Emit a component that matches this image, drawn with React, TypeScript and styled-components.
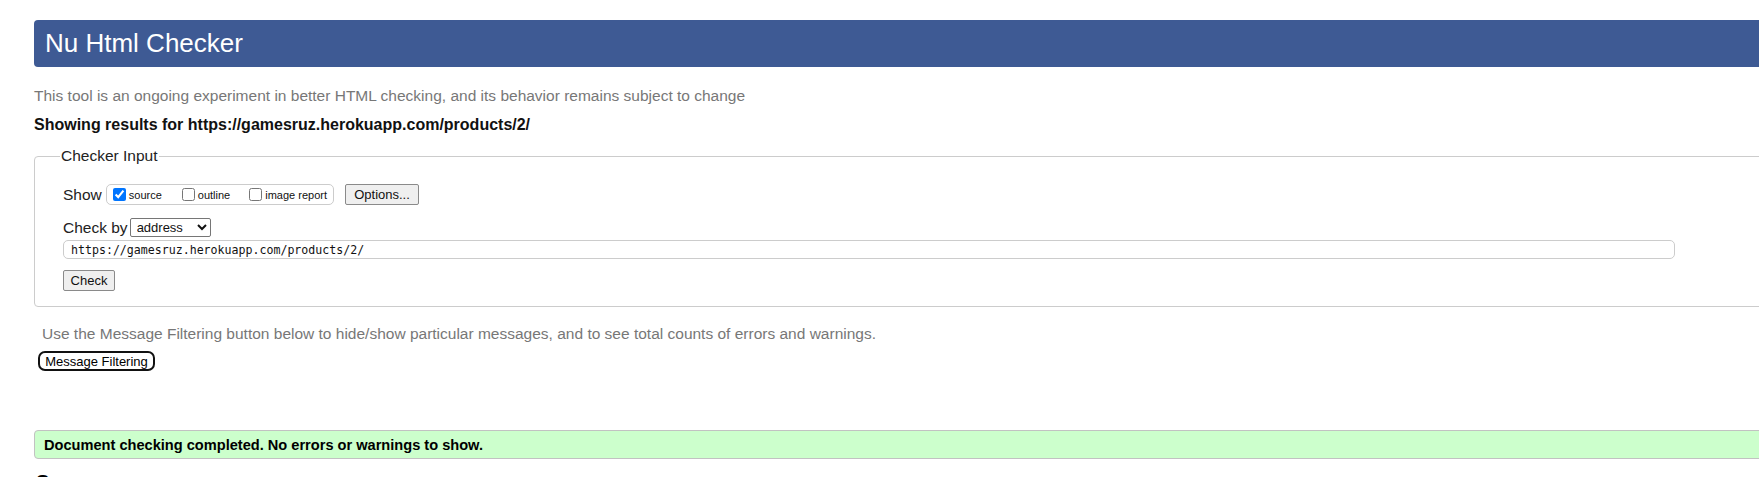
import React from "react";
import styled, { createGlobalStyle } from "styled-components";

const GlobalStyle = createGlobalStyle`
  html, body {
    margin: 0;
    padding: 0;
    background: #ffffff;
    overflow: hidden;
  }
  body {
    font-family: "Liberation Sans", Arial, sans-serif;
    color: #000;
  }
`;

const Page = styled.div`
  width: 1766px;
  padding: 20px 0 0 34px;
`;

const Title = styled.h1`
  margin: 0;
  height: 47px;
  box-sizing: border-box;
  padding: 9px 0 0 11px;
  background: #3e5a94;
  color: #ffffff;
  border-radius: 4px;
  font-size: 26px;
  font-weight: normal;
  line-height: 29px;
`;

const Note = styled.p<{ $indent?: number; $top: number }>`
  margin: ${(p) => p.$top}px 0 0 ${(p) => p.$indent ?? 0}px;
  color: #777777;
  font-size: 15.5px;
  line-height: 18px;
`;

const Results = styled.p`
  margin: 11px 0 0;
  font-size: 16px;
  font-weight: bold;
  line-height: 18px;
  color: #111;
`;

const Fieldset = styled.fieldset`
  margin: 13px 0 0;
  border: 1px solid #cccccc;
  border-radius: 4px;
  padding: 0 0 15px 28px;
  min-width: 0;
`;

const Legend = styled.legend`
  padding: 0 1px;
  margin-left: -3px;
  font-size: 15.5px;
  line-height: 18px;
  color: #222;
`;

const Row = styled.div<{ $top: number; $h: number }>`
  display: flex;
  align-items: center;
  height: ${(p) => p.$h}px;
  margin-top: ${(p) => p.$top}px;
`;

const Label = styled.span`
  font-size: 15.5px;
  line-height: 18px;
  color: #222;
`;

const OptionGroup = styled.div`
  display: flex;
  align-items: center;
  height: 21px;
  box-sizing: border-box;
  margin-left: 4px;
  padding: 0 6px 0 3px;
  border: 1px solid #cccccc;
  border-radius: 5px;
`;

const CheckItem = styled.label<{ $gap: number }>`
  display: flex;
  align-items: center;
  margin-left: ${(p) => p.$gap}px;
  font-size: 11px;
  color: #111;
`;

const Check = styled.input`
  width: 13px;
  height: 13px;
  margin: 0 3px 0 3px;
`;

const Button = styled.button<{ $w: number }>`
  width: ${(p) => p.$w}px;
  height: 21px;
  box-sizing: border-box;
  padding: 0;
  margin: 0;
  background: #efefef;
  border: 1px solid #8a8a8a;
  border-radius: 2px;
  font-family: "Liberation Sans", Arial, sans-serif;
  font-size: 13px;
  color: #111;
`;

const OptionsButton = styled(Button)`
  margin-left: 11px;
`;

const Select = styled.select`
  width: 81px;
  height: 19px;
  margin: 0 0 0 2px;
  padding: 0 0 0 2px;
  font-family: "Liberation Sans", Arial, sans-serif;
  font-size: 13px;
  color: #111;
  background: #fff;
  border: 1px solid #767676;
  border-radius: 2px;
`;

const UrlInput = styled.input`
  display: block;
  width: 1612px;
  height: 19px;
  box-sizing: border-box;
  margin: 3px 0 0;
  padding: 0 0 0 7px;
  border: 1px solid #cccccc;
  border-radius: 5px;
  font-family: "DejaVu Sans Mono", "Liberation Mono", monospace;
  font-size: 11.6px;
  color: #111;
`;

const CheckButtonWrap = styled.div`
  margin-top: 11px;
  height: 21px;
`;

const FilterButton = styled.button`
  display: block;
  margin: 8px 0 0 4px;
  width: 117px;
  height: 20px;
  box-sizing: border-box;
  padding: 0;
  background: #ffffff;
  border: 2px solid #111111;
  border-radius: 7px;
  font-family: "Liberation Sans", Arial, sans-serif;
  font-size: 13px;
  color: #000;
`;

const Success = styled.div`
  margin-top: 59px;
  height: 29px;
  box-sizing: border-box;
  padding: 0 0 0 9px;
  display: flex;
  align-items: center;
  background: #ccffcc;
  border: 1px solid #c2c2c2;
  border-radius: 4px;
  font-size: 14.6px;
  font-weight: bold;
  color: #000;
`;

const SourceHeading = styled.h2`
  margin: 12px 0 0 2px;
  font-size: 20px;
  line-height: 23px;
  font-weight: bold;
`;

export default function App() {
  return (
    <>
      <GlobalStyle />
      <Page>
        <Title>Nu Html Checker</Title>
        <Note $top={20}>
          This tool is an ongoing experiment in better HTML checking, and its
          behavior remains subject to change
        </Note>
        <Results>
          Showing results for https://gamesruz.herokuapp.com/products/2/
        </Results>
        <Fieldset>
          <Legend>Checker Input</Legend>
          <Row $top={19} $h={21}>
            <Label>Show</Label>
            <OptionGroup>
              <CheckItem $gap={0}>
                <Check type="checkbox" defaultChecked />
                source
              </CheckItem>
              <CheckItem $gap={17}>
                <Check type="checkbox" />
                outline
              </CheckItem>
              <CheckItem $gap={16}>
                <Check type="checkbox" />
                image report
              </CheckItem>
            </OptionGroup>
            <OptionsButton type="button" $w={74}>
              Options...
            </OptionsButton>
          </Row>
          <Row $top={13} $h={19}>
            <Label>Check by</Label>
            <Select defaultValue="address">
              <option value="address">address</option>
              <option value="upload">file upload</option>
              <option value="text">text input</option>
            </Select>
          </Row>
          <UrlInput
            type="text"
            defaultValue="https://gamesruz.herokuapp.com/products/2/"
          />
          <CheckButtonWrap>
            <Button type="button" $w={52}>
              Check
            </Button>
          </CheckButtonWrap>
        </Fieldset>
        <Note $top={18} $indent={8}>
          Use the Message Filtering button below to hide/show particular
          messages, and to see total counts of errors and warnings.
        </Note>
        <FilterButton type="button">Message Filtering</FilterButton>
        <Success>Document checking completed. No errors or warnings to show.</Success>
        <SourceHeading>Source</SourceHeading>
      </Page>
    </>
  );
}
